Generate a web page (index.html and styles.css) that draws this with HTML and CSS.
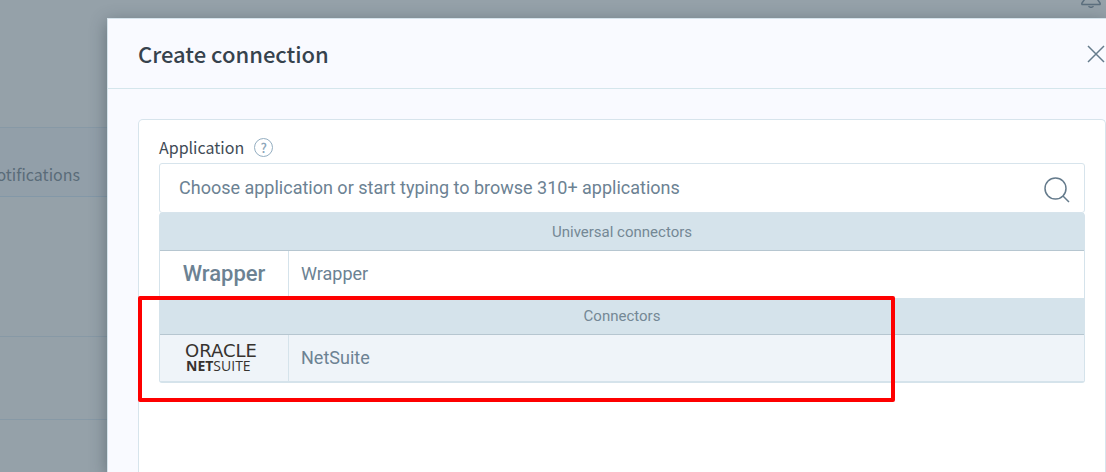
FILE: index.html
```
<!DOCTYPE html>
<html lang="en">

<head>
  <meta charset="UTF-8">
  <meta name="viewport" content="width=device-width, initial-scale=1.0">
  <title>Create connection</title>
  <link rel="stylesheet" href="styles.css">
</head>

<body>
  <div class="page">
    <div class="topbar">
      <svg class="bell" viewBox="0 0 22 24" width="22" height="24" fill="none" stroke="#5c6f7e" stroke-width="1.5">
        <path d="M5.500 10a5.500 6 0 0 1 11 0v4l3.500 5c.5.900.2 1.500-.7 1.500H2.700c-.9 0-1.200-.6-.7-1.500l3.500-5Z" />
        <path d="M8.500 22.200q2.500 2.200 5 0" />
      </svg>
    </div>
    <nav class="tabs">
      <a class="tab" href="#">Notifications</a>
    </nav>
    <div class="block block-tall"></div>
    <div class="block"></div>
  </div>

  <div class="modal" role="dialog" aria-labelledby="modal-title">
    <header class="modal-header">
      <h1 id="modal-title">Create connection</h1>
      <button class="close-btn" type="button" aria-label="Close">
        <svg viewBox="0 0 18 18" width="18" height="18" stroke="#657b8c" stroke-width="1.5">
          <path d="M1 1l16 16M17 1L1 17" />
        </svg>
      </button>
    </header>

    <div class="modal-body">
      <div class="panel">
        <div class="field-label">
          <label for="application">Application</label>
          <button class="help-btn" type="button" aria-label="Help">?</button>
        </div>

        <div class="search">
          <input type="text" id="application" placeholder="Choose application or start typing to browse 310+ applications">
          <svg viewBox="0 0 26 26" width="26" height="26" fill="none" stroke="#657b8c" stroke-width="1.5">
            <circle cx="11.5" cy="11.5" r="10.5" />
            <path d="M19 19l6 6" />
          </svg>
        </div>

        <div class="results">
          <div class="group-title">Universal connectors</div>
          <button class="app-row" type="button">
            <span class="app-logo logo-text">Wrapper</span>
            <span class="app-name">Wrapper</span>
          </button>
          <div class="group">
            <div class="group-title">Connectors</div>
            <button class="app-row active" type="button">
              <span class="app-logo">
                <svg viewBox="0 0 80 46" width="80" height="46" fill="#37332f">
                  <text class="logo-oracle" x="1" y="22">ORACLE</text>
                  <text class="logo-netsuite" x="2" y="36"><tspan class="bold">NET</tspan>SUITE</text>
                </svg>
              </span>
              <span class="app-name">NetSuite</span>
            </button>
            <div class="highlight"></div>
          </div>
        </div>
      </div>
    </div>
  </div>
</body>

</html>
```

FILE: styles.css
```
* {
  box-sizing: border-box;
}

body {
  margin: 0;
  min-height: 100vh;
  position: relative;
  overflow: hidden;
  background: #95a1a9;
  color: #6c8293;
  font-family: Roboto, "Liberation Sans", sans-serif;
  font-size: 18px;
}

button {
  border: none;
  padding: 0;
  background: none;
  color: inherit;
  font: inherit;
  cursor: pointer;
}

svg {
  display: block;
}

/* Page behind the dialog */
.topbar {
  height: 128px;
  padding-right: 4px;
  display: flex;
  justify-content: flex-end;
  border-bottom: 1px solid #8799a6;
}

.bell {
  margin-top: -16px;
}

.tabs {
  height: 69px;
  display: flex;
  background: #929fa9;
  border-bottom: 1px solid #8398a8;
}

.tab {
  width: 80px;
  line-height: 92px;
  display: flex;
  justify-content: flex-end;
  font-family: "Noto Sans CJK SC", sans-serif;
  font-size: 16px;
  color: #5a6c79;
  text-decoration: none;
}

.block {
  height: 83px;
  border-bottom: 1px solid #8799a6;
}

.block-tall {
  height: 140px;
}

/* Dialog */
.modal {
  position: absolute;
  top: 18px;
  right: 0;
  bottom: 0;
  left: 107px;
  display: flex;
  flex-direction: column;
  background: #f9faff;
  border: solid #d5e3eb;
  border-width: 1px 0 0 1px;
  box-shadow: 0 4px 16px rgba(40, 55, 65, 0.45);
}

.modal-header {
  height: 70px;
  padding-left: 30px;
  display: flex;
  align-items: center;
  justify-content: space-between;
  border-bottom: 1px solid #d5e6ec;
}

h1 {
  margin: 0;
  padding-bottom: 2px;
  font-family: "Noto Sans CJK SC", sans-serif;
  font-size: 22px;
  font-weight: 500;
  line-height: 32px;
  color: #36424d;
}

.close-btn {
  padding-right: 1px;
}

.modal-body {
  flex: 1;
  display: flex;
  padding: 30px 0 0 30px;
}

.panel {
  flex: 1;
  padding: 16px 20px;
  background: #fff;
  border: 1px solid #d7e4ec;
  border-bottom: none;
  border-radius: 5px 5px 0 0;
}

.field-label {
  height: 27px;
  display: flex;
  align-items: center;
  gap: 10px;
  padding-bottom: 5px;
  font-family: "Noto Sans CJK SC", sans-serif;
  font-size: 16px;
  color: #3f4b56;
}

.help-btn {
  width: 19px;
  height: 19px;
  border: 1px solid #94aec1;
  border-radius: 50%;
  font-family: "Noto Sans CJK SC", sans-serif;
  font-size: 13px;
  font-weight: 500;
  line-height: 17px;
  color: #8ca6ba;
}

.search {
  height: 50px;
  display: flex;
  align-items: center;
  padding: 3px 14px 0 19px;
  border: 1px solid #d7e4ec;
  border-radius: 3px;
}

.search input {
  flex: 1;
  padding: 0 0 5px;
  border: none;
  outline: none;
  background: none;
  font: inherit;
}

.search input::placeholder {
  color: #6c8293;
  opacity: 1;
}

.results {
  border: solid #d5e3eb;
  border-width: 0 1px 2px;
  border-radius: 3px;
}

.group {
  position: relative;
}

.group-title {
  height: 38px;
  background: #d5e3eb;
  border-bottom: 1px solid #b6c6d0;
  font-size: 15px;
  line-height: 39px;
  text-align: center;
  color: #748895;
}

.group .group-title {
  height: 37px;
  line-height: 36px;
}

.app-row {
  width: 100%;
  height: 47px;
  display: flex;
  align-items: stretch;
  background: #fff;
  line-height: 46px;
  text-align: left;
}

.app-row.active {
  height: 46px;
  background: #eff4f9;
}

.app-logo {
  width: 129px;
  display: flex;
  align-items: center;
  justify-content: center;
  border-right: 1px solid #d5e3eb;
}

.app-name {
  padding-left: 12px;
}

.logo-text {
  padding-bottom: 2px;
  font-size: 22px;
  font-weight: 500;
  line-height: 44px;
}

.logo-oracle {
  font-family: "DejaVu Sans", sans-serif;
  font-size: 18px;
}

.logo-netsuite {
  font-family: "Open Sans", sans-serif;
  font-size: 14px;
}

.logo-netsuite .bold {
  font-weight: 700;
}

/* Red frame around the connectors group */
.highlight {
  position: absolute;
  top: -2px;
  right: 189px;
  bottom: -21px;
  left: -22px;
  border: 4px solid #fe0000;
  border-radius: 2px;
  pointer-events: none;
}
```
